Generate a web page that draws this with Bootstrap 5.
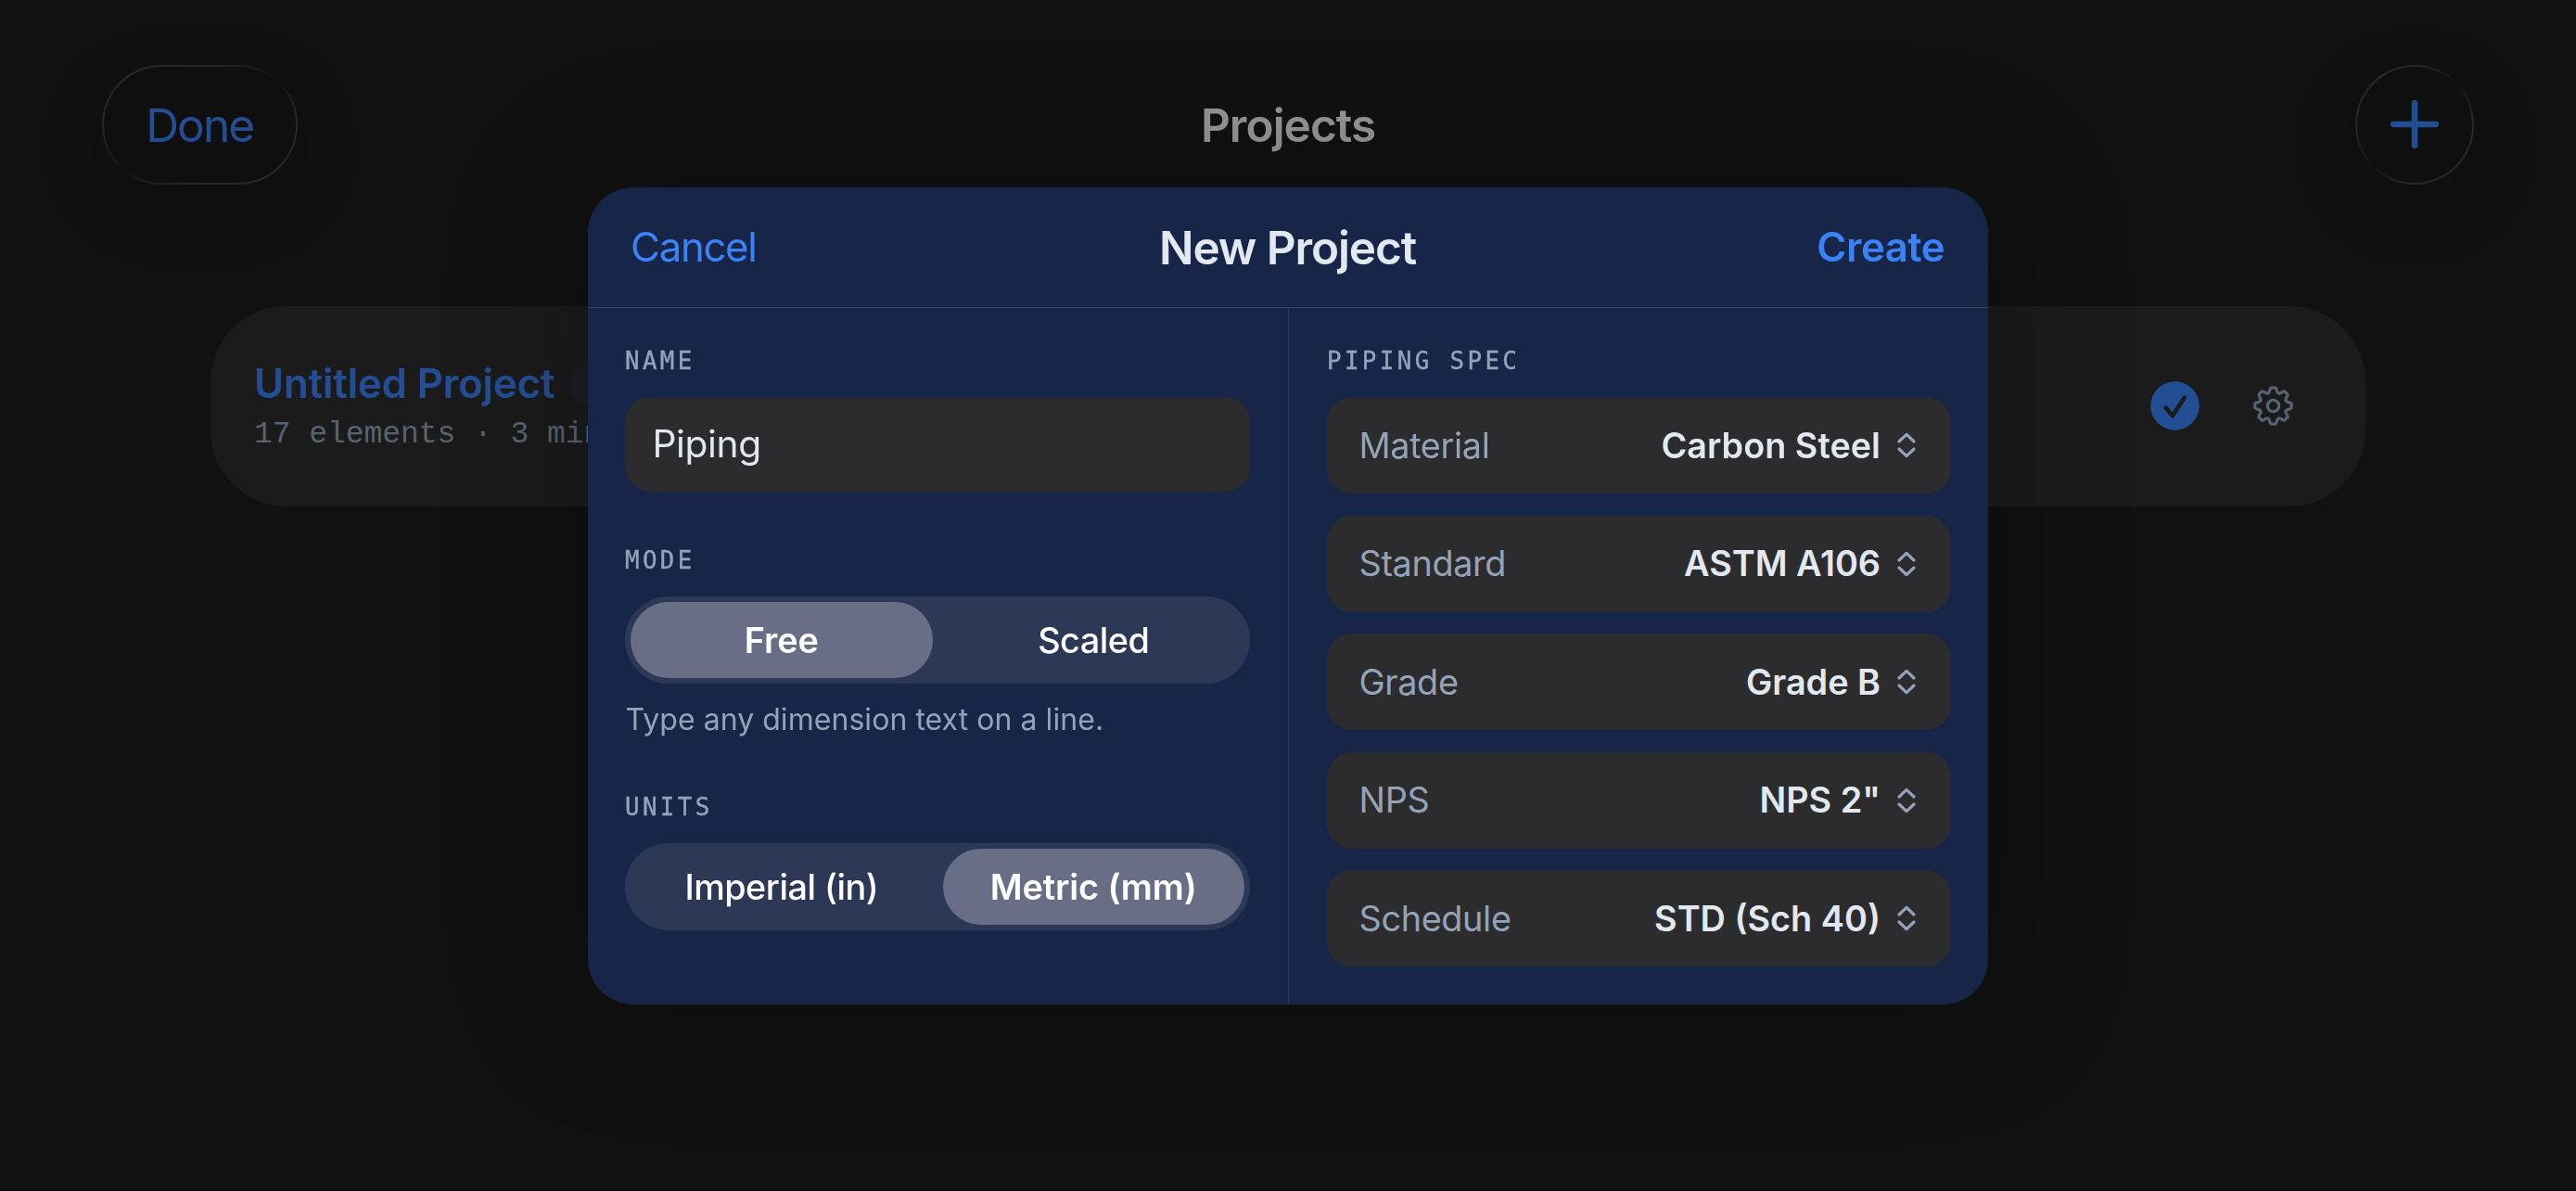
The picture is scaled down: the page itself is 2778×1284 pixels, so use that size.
<!DOCTYPE html>
<html lang="en" data-bs-theme="dark">
<head>
<meta charset="utf-8">
<meta name="viewport" content="width=device-width, initial-scale=1">
<title>New Project</title>
<link rel="stylesheet" href="https://cdn.jsdelivr.net/npm/bootstrap@5.3.0/dist/css/bootstrap.min.css">
<style>
  body { background: #111111; font-family: Inter, "Liberation Sans", sans-serif; color: #e2e8f0; font-kerning: normal; }
  button { font: inherit; color: inherit; background: none; border: 0; padding: 0; }
  svg { display: block; flex: none; }

  /* dimmed page behind the sheet */
  .page-back { height: 1284px; border-bottom: 2px solid #0b0a0b; }
  .top-strip { padding: 70px 110px 0; }
  .glass-btn { height: 128.5px; border: 2px solid transparent; border-radius: 64px; color: #234e94;
    background: linear-gradient(#0f0f0f, #0f0f0f) padding-box,
      linear-gradient(to bottom right, #292929 0%, #272727 28%, #1c1c1c 40%, #101010 50%, #1c1c1c 60%, #272727 72%, #292929 100%) border-box;
    box-shadow: 0 24px 68px rgba(11, 11, 22, .22); }
  .glass-done { width: 210.5px; font-size: 49.5px; letter-spacing: -1.9px; line-height: 1.2; padding-top: 2px; }
  .glass-plus { width: 128.5px; }
  .page-title { font-size: 49.5px; font-weight: 600; letter-spacing: -.96px; line-height: 60px; color: #969696; padding-top: 2px; }
  .side-slot { flex: 1 1 0; }
  .project-item { margin: 131.5px 227px 0 227px; height: 215.5px; border-radius: 82px; background: #1b1b1b; padding: 8px 78px 0 47px; }
  .project-icons { gap: 58px; padding-bottom: 9px; }
  .project-name { font-size: 43.7px; font-weight: 600; letter-spacing: -.11px; line-height: 54px; color: #234e94; }
  .project-meta { font: 33px/55px "Liberation Mono", monospace; letter-spacing: -.05px; color: #596270; }
  .project-tag { width: 130px; height: 45px; border-radius: 23px; background: #1a2028; margin-left: 17px; }

  /* sheet */
  .sheet { width: 1510px; height: 881px; border-radius: 49px; background: #172648; overflow: hidden; }
  .sheet-wrap { border-radius: 49px; box-shadow: 0 0 150px rgba(0, 0, 0, .3); }
  .sheet-head { height: 130.5px; padding: 1px 47px 0 46px; border-bottom: 1px solid #3a4256; font-size: 43.7px; color: #3b82f6; }
  .sheet-title { font-size: 49.5px; font-weight: 600; letter-spacing: -1.11px; line-height: 60px; color: #e2e8f0; }
  .ls-cancel { letter-spacing: -1.28px; }
  .ls-create { letter-spacing: -.52px; font-weight: 600; }
  .pane { padding: 39px 40px 0; }
  .pane-left { width: 755px; padding-right: 41px; }
  .pane-right { border-left: 1px solid #31394f; padding-left: 41px; }
  .eyebrow { font: 25.8px/36px "DejaVu Sans Mono", monospace; letter-spacing: 3.4px; color: #94a3b8; margin-bottom: 21px; -webkit-text-stroke: .4px #94a3b8; }
  .field-name { height: 101.5px; border-radius: 27px; background: #2c2c2e; padding: 0 29.5px; font-size: 40.7px; letter-spacing: -.4px; margin-bottom: 56.5px; }
  .switcher { height: 94px; border-radius: 47px; background: #2c3855; padding: 6px; gap: 11px; color: #fff; font-size: 37.8px; }
  .switcher button { flex: 1 1 0; border-radius: 41px; font-weight: 500; letter-spacing: -.5px; }
  .switcher button.picked { background: #686e86; font-weight: 600; letter-spacing: -.1px; }
  .hint-line { font-size: 32px; line-height: 42px; letter-spacing: .05px; color: #94a3b8; margin: 18px 0 55px .5px; }
  .spec-list { gap: 23.5px; }
  .spec-item { height: 104px; border-radius: 27px; background: #2c2c2e; padding: 0 38px 0 34.5px; font-size: 37.8px; }
  .spec-key { color: #94a3b8; letter-spacing: -.35px; }
  .spec-val { font-weight: 600; margin-right: 18px; }
</style>
</head>
<body>
<div class="page-back overflow-hidden">
  <header class="top-strip d-flex align-items-center">
    <div class="side-slot d-flex"><button class="glass-btn glass-done">Done</button></div>
    <div class="page-title">Projects</div>
    <div class="side-slot d-flex justify-content-end">
      <button class="glass-btn glass-plus d-flex align-items-center justify-content-center" aria-label="Add project">
        <svg width="52" height="52" viewBox="0 0 52 52" fill="none" stroke="#234e94" stroke-width="6.6" stroke-linecap="round"><path d="M26 3.3V48.7M3.3 26H48.7"/></svg>
      </button>
    </div>
  </header>
  <main class="project-item d-flex align-items-center justify-content-between">
    <div>
      <div class="d-flex align-items-center"><span class="project-name">Untitled Project</span><span class="project-tag"></span></div>
      <div class="project-meta">17 elements · 3 min</div>
    </div>
    <div class="project-icons d-flex align-items-center">
      <svg width="53" height="53" viewBox="0 0 53 53"><circle cx="26.5" cy="26.5" r="26.3" fill="#234e94"/><path d="M16.6 28.6L23.8 37.2L36.8 17.6" fill="none" stroke="#1b1b1b" stroke-width="4.6" stroke-linecap="round" stroke-linejoin="round"/></svg>
      <svg width="43" height="43" viewBox="-21.5 -21.5 43 43" fill="none" stroke="#596270" stroke-width="3.2" stroke-linecap="round">
        <defs><path id="tooth" d="M-5.7-13.7Q-4.3-14.3-3.9-16L-3.4-18.2Q-3-19.7-1.7-19.7H1.7Q3-19.7 3.4-18.2L3.9-16Q4.3-14.3 5.7-13.7"/></defs>
        <use href="#tooth"/><use href="#tooth" transform="rotate(45)"/><use href="#tooth" transform="rotate(90)"/><use href="#tooth" transform="rotate(135)"/>
        <use href="#tooth" transform="rotate(180)"/><use href="#tooth" transform="rotate(225)"/><use href="#tooth" transform="rotate(270)"/><use href="#tooth" transform="rotate(315)"/>
        <circle r="6.2"/>
      </svg>
    </div>
  </main>
</div>

<div class="position-fixed top-0 start-0 w-100 h-100 d-flex align-items-center justify-content-center">
  <div class="sheet-wrap">
  <section class="sheet d-flex flex-column" role="dialog" aria-label="New Project">
    <div class="sheet-head d-flex align-items-center">
      <div class="side-slot"><button class="ls-cancel">Cancel</button></div>
      <div class="sheet-title">New Project</div>
      <div class="side-slot text-end"><button class="ls-create">Create</button></div>
    </div>
    <div class="d-flex flex-grow-1">
      <div class="pane pane-left">
        <div class="eyebrow">NAME</div>
        <div class="field-name d-flex align-items-center">Piping</div>
        <div class="eyebrow">MODE</div>
        <div class="switcher d-flex"><button class="picked">Free</button><button>Scaled</button></div>
        <div class="hint-line">Type any dimension text on a line.</div>
        <div class="eyebrow">UNITS</div>
        <div class="switcher d-flex"><button>Imperial (in)</button><button class="picked">Metric (mm)</button></div>
      </div>
      <div class="pane pane-right flex-grow-1">
        <div class="eyebrow">PIPING SPEC</div>
        <div class="spec-list d-flex flex-column">
          <div class="spec-item d-flex align-items-center"><span class="spec-key me-auto">Material</span><span class="spec-val">Carbon Steel</span><svg width="20" height="28" viewBox="0 0 20 28" fill="none" stroke="#94a3b8" stroke-width="3.2" stroke-linecap="round" stroke-linejoin="round"><path d="M2 10L10 2.4L18 10M2 18L10 25.6L18 18"/></svg></div>
          <div class="spec-item d-flex align-items-center"><span class="spec-key me-auto">Standard</span><span class="spec-val">ASTM A106</span><svg width="20" height="28" viewBox="0 0 20 28" fill="none" stroke="#94a3b8" stroke-width="3.2" stroke-linecap="round" stroke-linejoin="round"><path d="M2 10L10 2.4L18 10M2 18L10 25.6L18 18"/></svg></div>
          <div class="spec-item d-flex align-items-center"><span class="spec-key me-auto">Grade</span><span class="spec-val">Grade B</span><svg width="20" height="28" viewBox="0 0 20 28" fill="none" stroke="#94a3b8" stroke-width="3.2" stroke-linecap="round" stroke-linejoin="round"><path d="M2 10L10 2.4L18 10M2 18L10 25.6L18 18"/></svg></div>
          <div class="spec-item d-flex align-items-center"><span class="spec-key me-auto">NPS</span><span class="spec-val">NPS 2"</span><svg width="20" height="28" viewBox="0 0 20 28" fill="none" stroke="#94a3b8" stroke-width="3.2" stroke-linecap="round" stroke-linejoin="round"><path d="M2 10L10 2.4L18 10M2 18L10 25.6L18 18"/></svg></div>
          <div class="spec-item d-flex align-items-center"><span class="spec-key me-auto">Schedule</span><span class="spec-val">STD (Sch 40)</span><svg width="20" height="28" viewBox="0 0 20 28" fill="none" stroke="#94a3b8" stroke-width="3.2" stroke-linecap="round" stroke-linejoin="round"><path d="M2 10L10 2.4L18 10M2 18L10 25.6L18 18"/></svg></div>
        </div>
      </div>
    </div>
  </section>
  </div>
</div>
<script src="https://cdn.jsdelivr.net/npm/bootstrap@5.3.0/dist/js/bootstrap.bundle.min.js"></script>
</body>
</html>
